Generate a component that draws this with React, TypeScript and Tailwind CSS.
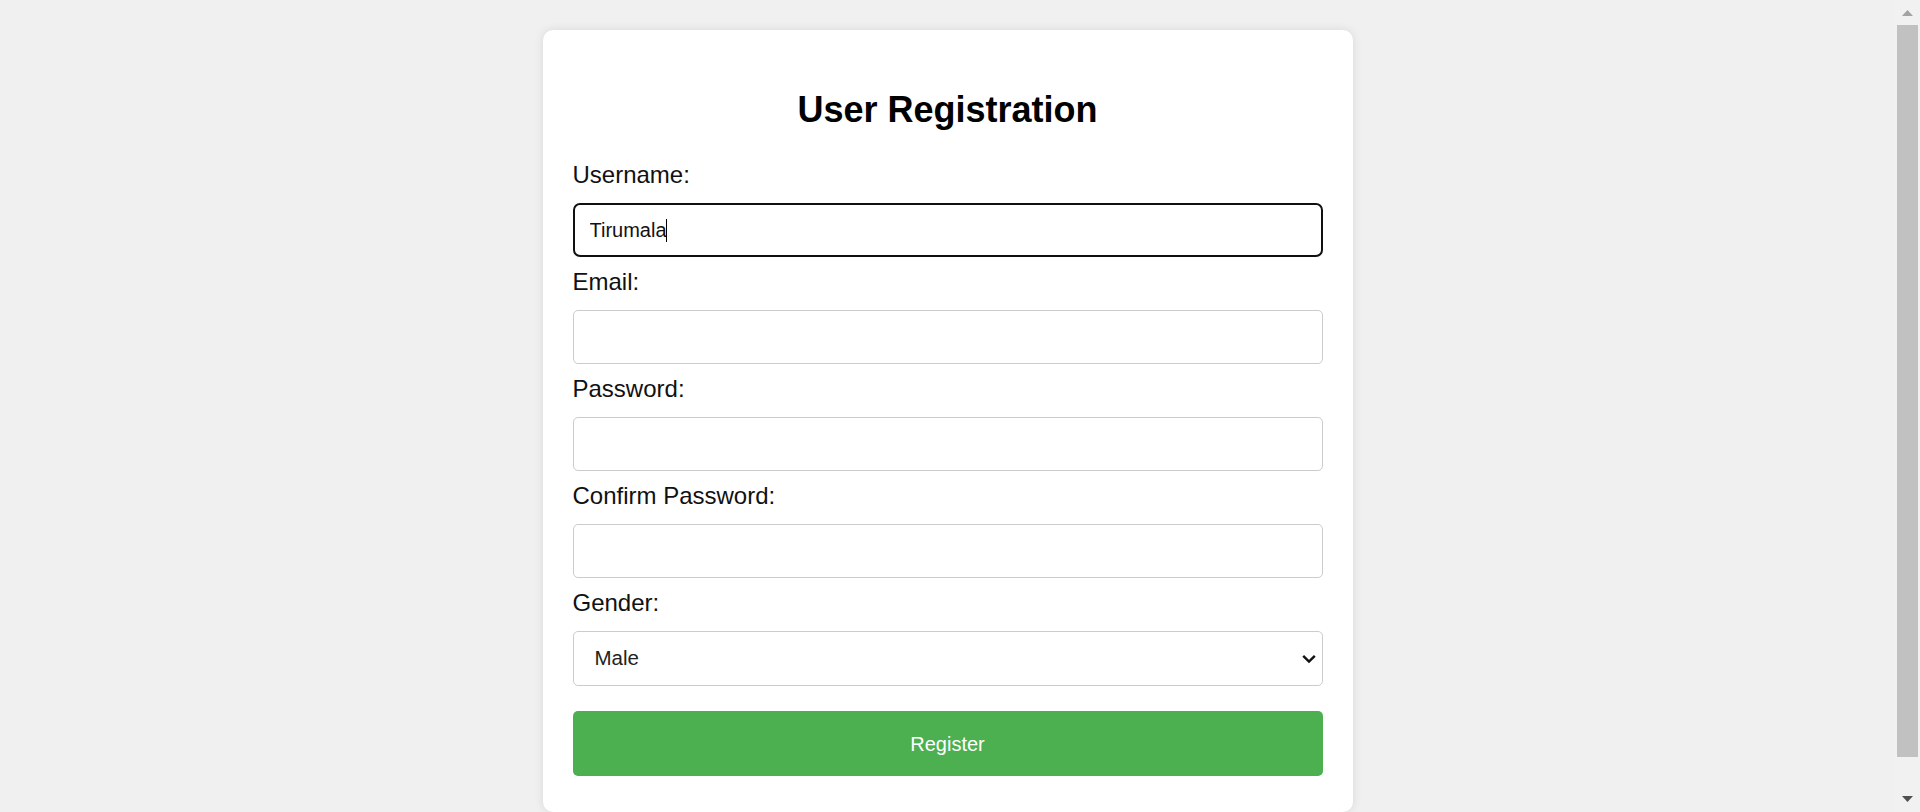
export default function App() {
  const fields = [
    { label: "Email:", type: "email" },
    { label: "Password:", type: "password" },
    { label: "Confirm Password:", type: "password" },
  ];

  return (
    <div className="flex h-[812px] overflow-hidden bg-[#f0f0f0] font-['Liberation_Sans',Arial,sans-serif]">
      {/* page */}
      <div className="flex-1 overflow-hidden pt-[30px]">
        <div className="mx-auto w-[810px] bg-white rounded-[10px] shadow-[0_0_10px_rgba(0,0,0,0.1)] px-[30px] pt-[60px] pb-[36px]">
          <h1 className="text-center text-[36px] leading-[40px] font-bold text-black">User Registration</h1>

          <form className="mt-[32px] flex flex-col" onSubmit={(e) => e.preventDefault()}>
            {/* Username (focused) */}
            <label className="text-[24px] leading-[26px] text-[#111]">Username:</label>
            <div className="relative mt-[15px]">
              <input
                type="text"
                defaultValue="Tirumala"
                className="w-full h-[54px] px-[15px] border-[2.5px] border-[#101010] rounded-[7px] text-[20px] text-[#111] outline-none"
              />
              <span className="absolute left-[93px] top-[16px] h-[23px] w-px bg-black" />
            </div>

            {fields.map((f) => (
              <div key={f.label} className="flex flex-col">
                <label className="mt-[12px] text-[24px] leading-[26px] text-[#111]">{f.label}</label>
                <input
                  type={f.type}
                  className="mt-[15px] w-full h-[54px] px-[15px] border border-[#ccc] rounded-[5px] text-[20px] outline-none"
                />
              </div>
            ))}

            <label className="mt-[12px] text-[24px] leading-[26px] text-[#111]">Gender:</label>
            <div className="relative mt-[15px]">
              <select className="appearance-none w-full h-[55px] pl-[21px] pr-[40px] border border-[#ccc] rounded-[5px] text-[20.5px] text-[#222] bg-white outline-none">
                <option>Male</option>
                <option>Female</option>
                <option>Other</option>
              </select>
              <svg
                className="absolute right-[7px] top-[23px] pointer-events-none"
                width="14"
                height="10"
                viewBox="0 0 14 10"
                fill="none"
              >
                <path d="M1.2 1.8 L7 7.6 L12.8 1.8" stroke="#111" strokeWidth="2.4" />
              </svg>
            </div>

            <button
              type="submit"
              className="mt-[25px] h-[65px] w-full rounded-[5px] bg-[#4caf50] text-white text-[20px]"
            >
              Register
            </button>
          </form>
        </div>
      </div>

      {/* scrollbar */}
      <div className="w-[25px] h-full bg-[#f1f1f1] flex flex-col items-center">
        <svg width="11" height="25" viewBox="0 0 11 25" className="shrink-0">
          <path d="M5.5 10 L11 16 L0 16 Z" fill="#a3a3a3" />
        </svg>
        <div className="w-[21px] h-[732px] bg-[#c1c1c1]" />
        <div className="flex-1" />
        <svg width="11" height="25" viewBox="0 0 11 25" className="shrink-0">
          <path d="M0 9 L11 9 L5.5 15 Z" fill="#505050" />
        </svg>
      </div>
    </div>
  );
}
